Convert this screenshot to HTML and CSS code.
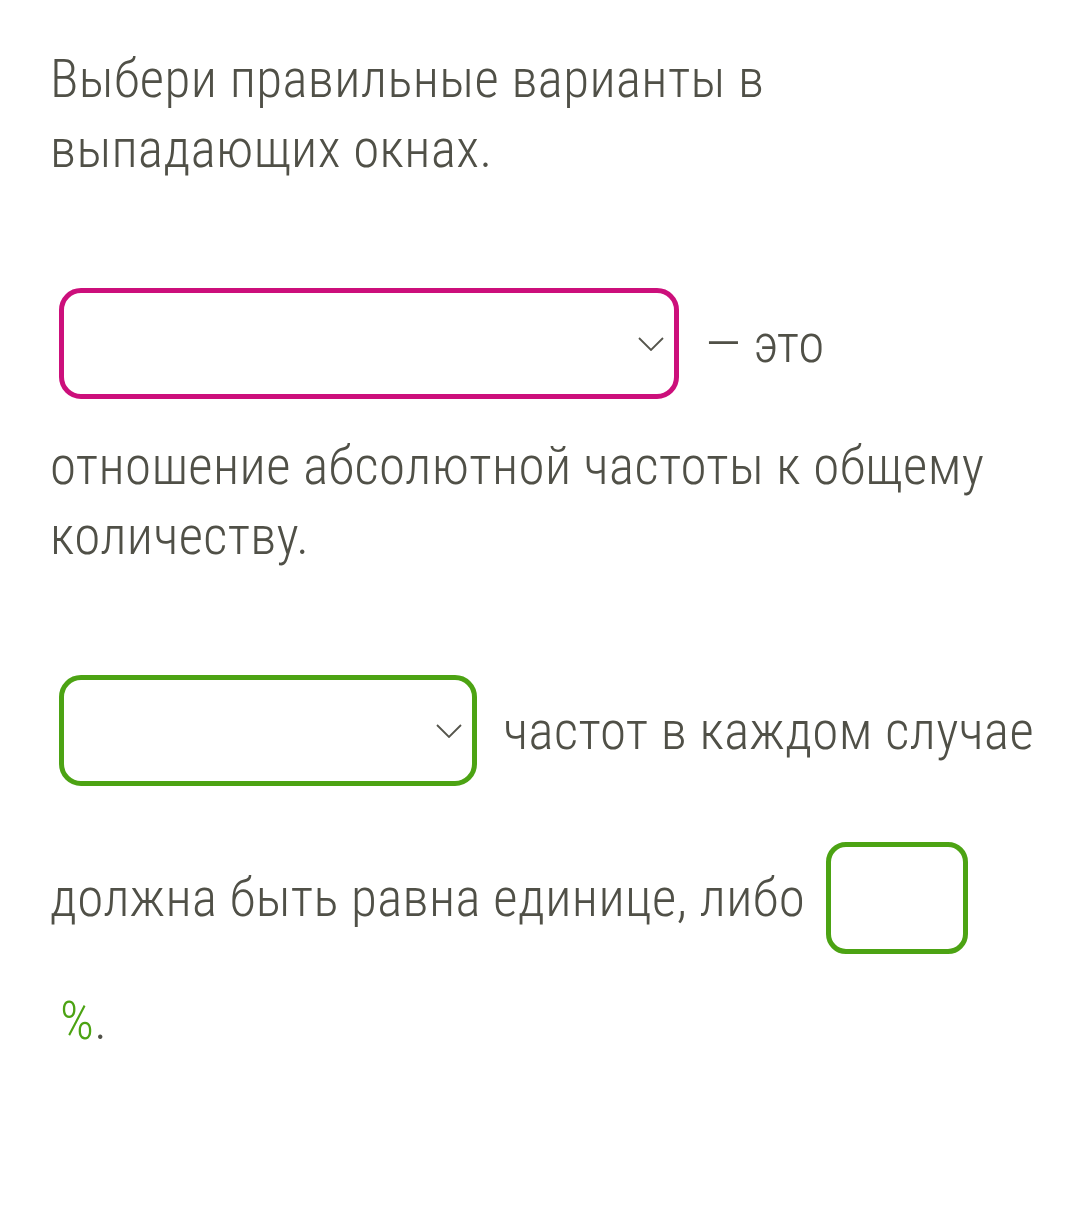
FILE: index.html
```html
<!DOCTYPE html>
<html>
<head>
    <meta charset="utf-8">
    <title>Выбери правильные варианты</title>
    <link rel="stylesheet" href="styles.css">
</head>
<body>
    <div class="task">
        <p class="text">Выбери правильные варианты в выпадающих окнах.</p>

        <p class="text">
            <span class="select select-wrong" style="width: 620px;">
                <svg class="chevron" width="26" height="14" viewBox="0 0 26 14"><path d="M1 1 L13 13 L25 1" fill="none" stroke="#55554c" stroke-width="1.8"/></svg>
            </span>
            — это отношение абсолютной частоты к общему количеству.
        </p>

        <p class="text">
            <span class="select select-right" style="width: 418px;">
                <svg class="chevron" width="26" height="14" viewBox="0 0 26 14"><path d="M1 1 L13 13 L25 1" fill="none" stroke="#55554c" stroke-width="1.8"/></svg>
            </span>
            частот в каждом случае должна быть равна единице, либо
            <span class="field field-right"></span>
            <br><span class="unit">%</span>.
        </p>
    </div>
</body>
</html>
```

FILE: styles.css
```css
/* Общие стили */
body {
    margin: 0;
    background: #ffffff;
    font-family: "Roboto Condensed", Roboto, "Liberation Sans", sans-serif;
    font-stretch: condensed;
    font-weight: 300;
    color: #505047;
}

.task {
    padding: 44px 38px 0 50px;
}

.text {
    margin: 0 0 80px;
    font-size: 53px;
    line-height: 70px;
    letter-spacing: 0.4px;
}

/* Выпадающие окна */
.select {
    display: inline-flex;
    align-items: center;
    justify-content: flex-end;
    box-sizing: border-box;
    height: 111px;
    margin: 24px 14px 32px 9px;
    padding-right: 10px;
    border: 5px solid #ccc;
    border-radius: 22px;
    vertical-align: middle;
}

.select-wrong {
    border-color: #cc0f7b;
}

.select-right {
    border-color: #4ca313;
}

.chevron {
    display: block;
}

/* Поле ввода */
.field {
    display: inline-block;
    box-sizing: border-box;
    width: 142px;
    height: 112px;
    margin: 24px 0 32px 8px;
    border: 5px solid #4ca313;
    border-radius: 20px;
    vertical-align: middle;
}

.unit {
    margin-left: 10px;
    color: #4ca313;
}
```
